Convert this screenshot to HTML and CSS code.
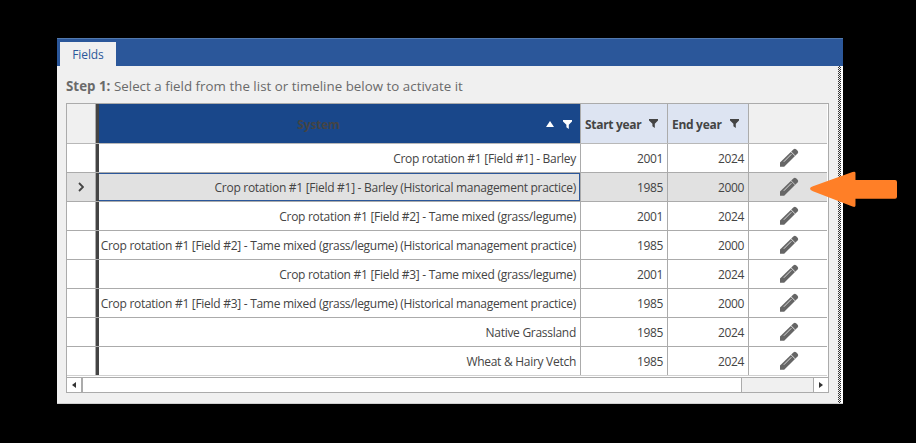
FILE: index.html
```html
<!DOCTYPE html>
<html lang="en">
<head>
<meta charset="utf-8">
<title>Fields</title>
<link rel="stylesheet" href="styles.css">
</head>
<body>
<svg width="0" height="0" class="defs">
  <symbol id="pencil" viewBox="0 0 20 20"><path d="M1 18.700V14.500L11.800 4L16 8L5.200 18.700Z" fill="#666"/><path d="M12.200 3.500L14.600 1.300Q15.800.4 17.100 1.300L18.800 3Q19.600 4.300 18.700 5.300L16.400 7.700Z" fill="#666"/><path d="M4.800 13.800L12.400 6.200" stroke="#d8d8d8" stroke-width="1"/></symbol>
  <symbol id="funnel" viewBox="0 0 9 9"><path d="M0 0H9V1.500L5.800 4.700V9L3.400 7.300V4.700L0 1.500Z" fill="currentColor"/></symbol>
</svg>
<main class="window">
  <header class="tabs"><div class="tab">Fields</div></header>
  <div class="body">
    <section class="content">
      <p class="step"><b>Step 1:</b> <span>Select a field from the list or timeline below to activate it</span></p>
      <div class="table">
        <div class="row head">
          <div class="mark"></div>
          <div class="name"><span class="title">System</span><svg class="sort" viewBox="0 0 8 6"><path d="M0 6L4 0L8 6Z" fill="#fff"/></svg><svg class="filter"><use href="#funnel"/></svg></div>
          <div class="start"><span>Start year</span><svg class="filter"><use href="#funnel"/></svg></div>
          <div class="end"><span>End year</span><svg class="filter"><use href="#funnel"/></svg></div>
          <div class="edit"></div>
        </div>
        <div class="row"><div class="mark"></div><div class="name"><span>Crop rotation #1 [Field #1] - Barley</span></div><div class="start">2001</div><div class="end">2024</div><div class="edit"><svg><use href="#pencil"/></svg></div></div>
        <div class="row active"><div class="mark"><svg viewBox="0 0 6 10"><path d="M1 1L5 5L1 9" fill="none" stroke="#444" stroke-width="1.8"/></svg></div><div class="name"><span>Crop rotation #1 [Field #1] - Barley (Historical management practice)</span></div><div class="start">1985</div><div class="end">2000</div><div class="edit"><svg><use href="#pencil"/></svg></div></div>
        <div class="row"><div class="mark"></div><div class="name"><span>Crop rotation #1 [Field #2] - Tame mixed (grass/legume)</span></div><div class="start">2001</div><div class="end">2024</div><div class="edit"><svg><use href="#pencil"/></svg></div></div>
        <div class="row"><div class="mark"></div><div class="name"><span>Crop rotation #1 [Field #2] - Tame mixed (grass/legume) (Historical management practice)</span></div><div class="start">1985</div><div class="end">2000</div><div class="edit"><svg><use href="#pencil"/></svg></div></div>
        <div class="row"><div class="mark"></div><div class="name"><span>Crop rotation #1 [Field #3] - Tame mixed (grass/legume)</span></div><div class="start">2001</div><div class="end">2024</div><div class="edit"><svg><use href="#pencil"/></svg></div></div>
        <div class="row"><div class="mark"></div><div class="name"><span>Crop rotation #1 [Field #3] - Tame mixed (grass/legume) (Historical management practice)</span></div><div class="start">1985</div><div class="end">2000</div><div class="edit"><svg><use href="#pencil"/></svg></div></div>
        <div class="row"><div class="mark"></div><div class="name"><span>Native Grassland</span></div><div class="start">1985</div><div class="end">2024</div><div class="edit"><svg><use href="#pencil"/></svg></div></div>
        <div class="row"><div class="mark"></div><div class="name"><span>Wheat &amp; Hairy Vetch</span></div><div class="start">1985</div><div class="end">2024</div><div class="edit"><svg><use href="#pencil"/></svg></div></div>
        <div class="scroll">
          <div class="prev"><svg viewBox="0 0 4 6"><path d="M4 0V6L0 3Z"/></svg></div>
          <div class="thumb"></div>
          <div class="next"><svg viewBox="0 0 4 6"><path d="M0 0V6L4 3Z"/></svg></div>
        </div>
      </div>
    </section>
    <div class="splitter"></div>
  </div>
</main>
<svg class="arrow" viewBox="0 0 88 37"><path d="M0 18Q0 16.500 3 15.500L43 1Q46 0 46 2V9H86Q88 9 88 11V26Q88 28 86 28H46V35Q46 37 43 36L3 20.500Q0 19.500 0 18Z" fill="#ff7f27"/></svg>
</body>
</html>
```
FILE: styles.css
```css
* { box-sizing: border-box; }
body {
  margin: 0;
  height: 443px;
  padding: 38px 0 0 57px;
  background: #000;
  color: #444;
  font: 12px/16px "Open Sans", "Noto Sans", sans-serif;
  position: relative;
  overflow: hidden;
}
svg { display: block; flex: none; }
.defs { position: absolute; }
.window { width: 786px; height: 366px; display: flex; flex-direction: column; background: #f0f0f0; }
.tabs { height: 28px; padding: 3px 0 0 3px; background: #2b579a; border-top: 1px solid #5279ae; }
.tab { width: 56px; height: 24px; background: #f0f0f0; color: #2b579a; text-align: center; line-height: 26px; letter-spacing: -0.1px; }
.body { flex: 1; display: flex; border-bottom: 1px solid #d0d0d0; }
.content { flex: 1; padding-left: 9px; }
.step { margin: 0; height: 37px; padding-top: 11px; line-height: 19px; font-size: 13.3px; letter-spacing: 0.03px; color: #6a6a6a; white-space: nowrap; }
.table { width: 763px; height: 290px; border: 1px solid #ababab; background: #fff; }
.row { display: flex; height: 29px; width: 760px; border-bottom: 1px solid #ababab; background: #fff; }
.row > div { display: flex; align-items: center; border-right: 1px solid #ababab; white-space: nowrap; }
.row > .mark { width: 29px; justify-content: center; }
.row > .name { width: 485px; border-left: 3px solid #444; justify-content: flex-end; padding: 2px 4px 0 0; letter-spacing: -0.283px; }
.row > .start { width: 87px; justify-content: flex-end; padding: 2px 4px 0 0; letter-spacing: -0.35px; }
.row > .end { width: 81px; justify-content: flex-end; padding: 2px 4px 0 0; letter-spacing: -0.35px; }
.row > .edit { width: 78px; border-right: 0; justify-content: center; padding-left: 2px; }
.edit svg { width: 20px; height: 20px; }
.mark svg { width: 6px; height: 10px; }
.head { height: 40px; background: #f0f0f0; font-weight: 700; border-bottom-color: #b8b8b8; }
.row.head > .name { background: #19478a; color: #444; padding: 1px 8px 0 0; letter-spacing: -0.2px; }
.head .title { flex: 1; text-align: center; padding: 2px 8px 0 0; }
.row.head > .start, .row.head > .end { background: #dde4f2; justify-content: flex-start; padding: 3px 0 0 4px; letter-spacing: -0.3px; }
.filter { width: 9px; height: 9px; margin-left: 9px; }
.start .filter, .end .filter { margin: 0 0 3px 8px; }
.name .filter { color: #fff; }
.sort { width: 8px; height: 6px; }
.active { background: #e1e1e1; }
.active > .name { box-shadow: inset 0 1px #2b579a, inset 0 -1px #2b579a, inset -1px 0 #2b579a; }
.row:nth-child(9) { border-bottom-color: #d0d0d0; }
.scroll { height: 15px; margin-top: 1px; border-top: 1px solid #ababab; display: flex; background: #f0f0f0; }
.scroll > div { background: #fff; display: flex; align-items: center; justify-content: center; }
.scroll svg { width: 4px; height: 6px; fill: #333; }
.scroll .prev { width: 16px; border-right: 2px solid #ababab; }
.scroll .thumb { width: 659px; border-right: 1px solid #ababab; }
.scroll .next { width: 15px; margin-left: auto; border-left: 1px solid #ababab; }
.splitter { width: 5px; border-right: 2px solid #fff; background: conic-gradient(#333 25%, #f0f0f0 0 50%, #333 0 75%, #f0f0f0 0) 0 0 / 2px 2px; }
.arrow { position: absolute; left: 810px; top: 171px; width: 87px; height: 36.6px; }
```
